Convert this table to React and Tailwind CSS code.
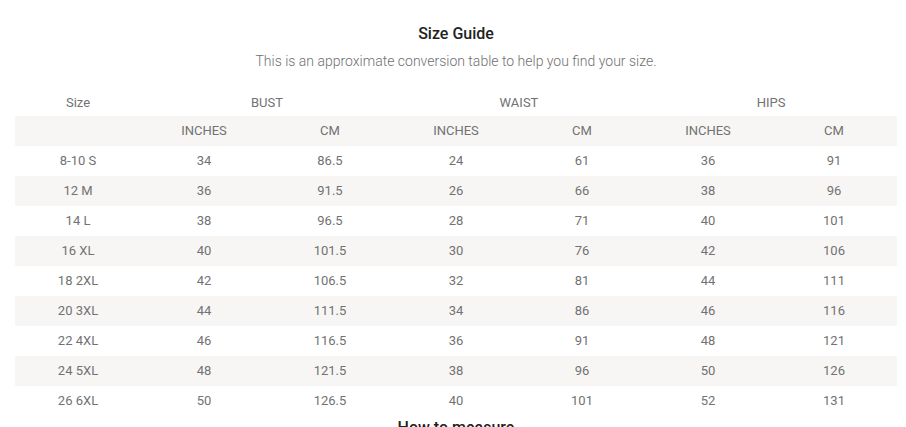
import React from 'react';

const rows = [
  ['8-10 S', '34', '86.5', '24', '61', '36', '91'],
  ['12 M', '36', '91.5', '26', '66', '38', '96'],
  ['14 L', '38', '96.5', '28', '71', '40', '101'],
  ['16 XL', '40', '101.5', '30', '76', '42', '106'],
  ['18 2XL', '42', '106.5', '32', '81', '44', '111'],
  ['20 3XL', '44', '111.5', '34', '86', '46', '116'],
  ['22 4XL', '46', '116.5', '36', '91', '48', '121'],
  ['24 5XL', '48', '121.5', '38', '96', '50', '126'],
  ['26 6XL', '50', '126.5', '40', '101', '52', '131'],
];

const App = () => {
  return (
    <div className="min-h-screen bg-white font-['Roboto',sans-serif] pl-[15px] pr-[9px] pt-[22px]">
      <h2 className="text-center text-[16px] leading-[24px] font-medium text-[#222]">Size Guide</h2>
      <p className="text-center text-[14px] leading-[20px] font-light text-[#707070] mt-[5px]">
        This is an approximate conversion table to help you find your size.
      </p>

      <table className="w-[882px] mt-[15px] table-fixed border-collapse text-[13px] text-[#727272] text-center">
        <thead>
          <tr className="h-[30px]">
            <td className="w-[126px] pt-[4px]">Size</td>
            <td colSpan={2} className="pt-[4px]">BUST</td>
            <td colSpan={2} className="pt-[4px]">WAIST</td>
            <td colSpan={2} className="pt-[4px]">HIPS</td>
          </tr>
          <tr className="h-[30px] bg-[#f7f6f5]">
            <td></td>
            <td>INCHES</td>
            <td>CM</td>
            <td>INCHES</td>
            <td>CM</td>
            <td>INCHES</td>
            <td>CM</td>
          </tr>
        </thead>
        <tbody>
          {rows.map((r, i) => (
            <tr key={r[0]} className={i % 2 === 1 ? 'h-[30px] bg-[#f7f6f5]' : 'h-[30px]'}>
              {r.map((c, j) => (
                <td key={j}>{c}</td>
              ))}
            </tr>
          ))}
        </tbody>
      </table>

      <h3 className="text-center text-[16px] leading-[24px] font-medium text-[#222]">How to measure</h3>
    </div>
  );
};

export default App;
